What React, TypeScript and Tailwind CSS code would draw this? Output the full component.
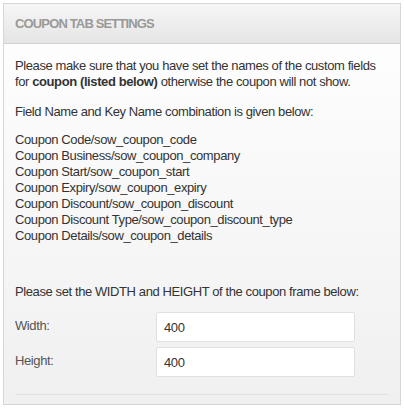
export default function App() {
  const fields = [
    "Coupon Code/sow_coupon_code",
    "Coupon Business/sow_coupon_company",
    "Coupon Start/sow_coupon_start",
    "Coupon Expiry/sow_coupon_expiry",
    "Coupon Discount/sow_coupon_discount",
    "Coupon Discount Type/sow_coupon_discount_type",
    "Coupon Details/sow_coupon_details",
  ];
  return (
    <div className="w-[405px] h-[408px] bg-white p-[3px] pr-[4px] pb-[3px] font-['Liberation_Sans',Arial,sans-serif] text-[13px] leading-[16px] tracking-[-0.4px] text-[#333]">
      <div className="h-[402px] border border-[#d6d6d6] flex flex-col bg-gradient-to-b from-white to-[#f0f0f0]">
        <div className="h-[40px] shrink-0 border-b border-[#d0d0d0] bg-gradient-to-b from-[#f6f6f6] to-[#e5e5e5] flex items-center pl-[11px]">
          <span className="font-bold text-[13px] text-[#999] uppercase tracking-[-0.85px]">Coupon Tab Settings</span>
        </div>
        <div className="flex-1 flex flex-col px-[11px] pt-[14px]">
          <p>
            Please make sure that you have set the names of the custom fields for{" "}
            <b>coupon (listed below)</b> otherwise the coupon will not show.
          </p>
          <p className="mt-[14px]">Field Name and Key Name combination is given below:</p>
          <div className="mt-[12px]">
            {fields.map((f) => (
              <div key={f}>{f}</div>
            ))}
          </div>
          <p className="mt-[40px]">Please set the WIDTH and HEIGHT of the coupon frame below:</p>
          <div className="mt-[12px] flex flex-col gap-[5px]">
            <div className="flex items-center">
              <span className="w-[141px] text-[#555] -mt-[3px]">Width:</span>
              <input
                className="w-[199px] h-[30px] bg-white border border-[#e0e0e0] rounded-[2px] px-[7px] text-[13px] text-[#333] outline-none"
                defaultValue="400"
              />
            </div>
            <div className="flex items-center">
              <span className="w-[141px] text-[#555] -mt-[3px]">Height:</span>
              <input
                className="w-[199px] h-[30px] bg-white border border-[#e0e0e0] rounded-[2px] px-[7px] text-[13px] text-[#333] outline-none"
                defaultValue="400"
              />
            </div>
          </div>
          <div className="mt-auto mb-[9px] border-t border-[#e2e2e2]" />
        </div>
      </div>
    </div>
  );
}
